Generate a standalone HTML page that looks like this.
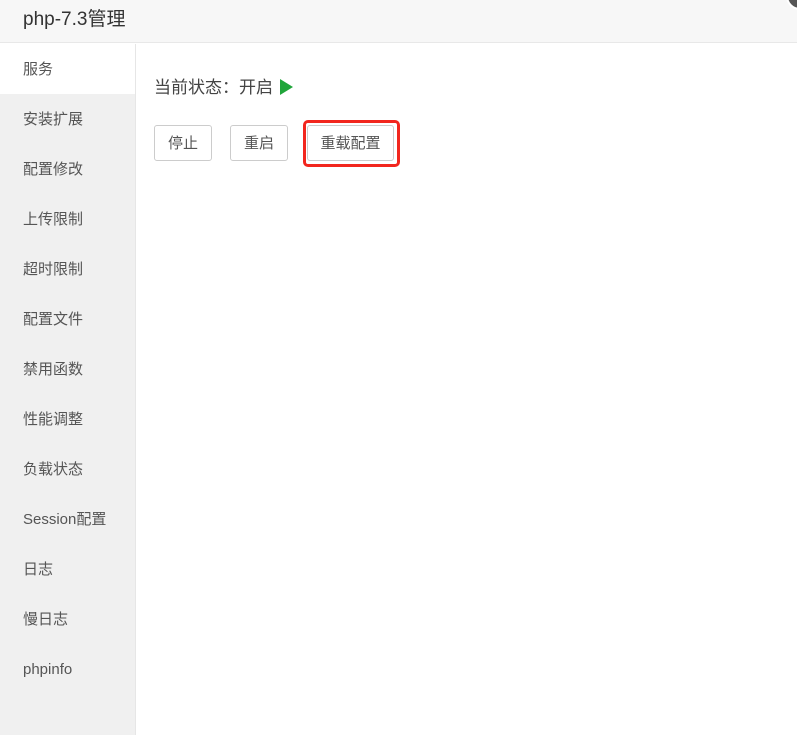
<!DOCTYPE html>
<html><head><meta charset="utf-8"><style>
body{margin:0;width:797px;height:735px;overflow:hidden;background:#fff;font-family:"Liberation Sans","Noto Sans CJK SC",sans-serif;position:relative;color:#333}
.hd{position:absolute;left:0;top:0;width:797px;height:43px;background:#f7f7f7;border-bottom:1px solid #e8e8e8;font-size:19px;line-height:40px;padding-left:23px;box-sizing:border-box;color:#333}
.circ{position:absolute;left:786px;top:-18px;width:24px;height:24px;border-radius:50%;background:#555;border:2px solid #fff}
.sb{position:absolute;left:0;top:44px;width:135px;height:691px;background:#f0f0f0;border-right:1px solid #e6e6e6}
.it{height:50px;line-height:52px;padding-left:23px;font-size:15px;color:#555}
.it.on{background:#fff}
.st{position:absolute;left:154px;top:76px;font-size:17px;color:#444;line-height:24px}
.tri{display:inline-block;width:0;height:0;border-left:13px solid #20a53a;border-top:8px solid transparent;border-bottom:8px solid transparent;vertical-align:-2px;margin-left:7px}
.b{position:absolute;top:125px;height:36px;border:1px solid #ccc;border-radius:3px;box-sizing:border-box;font-size:15px;color:#555;text-align:center;line-height:35px;background:#fff}
.red{position:absolute;left:303px;top:120px;width:97px;height:47px;border:3px solid #f2261e;border-radius:5px;box-sizing:border-box}
</style></head><body>
<div class="hd">php-7.3管理</div>
<div class="circ"></div>
<div class="sb">
<div class="it on">服务</div><div class="it">安装扩展</div><div class="it">配置修改</div><div class="it">上传限制</div><div class="it">超时限制</div><div class="it">配置文件</div><div class="it">禁用函数</div><div class="it">性能调整</div><div class="it">负载状态</div><div class="it">Session配置</div><div class="it">日志</div><div class="it">慢日志</div><div class="it">phpinfo</div>
</div>
<div class="st">当前状态：开启<span class="tri"></span></div>
<div class="b" style="left:154px;width:58px">停止</div>
<div class="b" style="left:230px;width:58px">重启</div>
<div class="red"></div>
<div class="b" style="left:307px;width:87px">重载配置</div>
</body></html>
